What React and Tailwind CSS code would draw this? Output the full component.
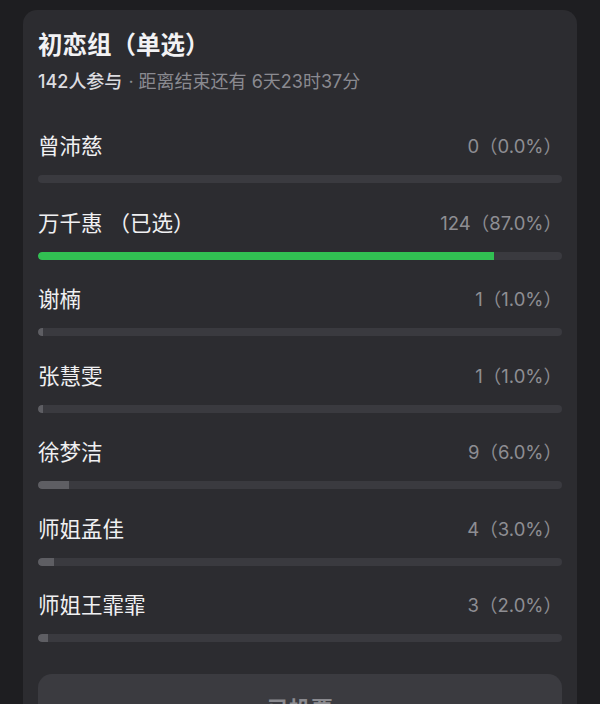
import React from "react";

const items = [
  { name: "曾沛慈", pct: 0, label: "0（0.0%）" },
  { name: "万千惠 （已选）", pct: 87, label: "124（87.0%）", selected: true },
  { name: "谢楠", pct: 1, label: "1（1.0%）" },
  { name: "张慧雯", pct: 1, label: "1（1.0%）" },
  { name: "徐梦洁", pct: 6, label: "9（6.0%）" },
  { name: "师姐孟佳", pct: 3, label: "4（3.0%）" },
  { name: "师姐王霏霏", pct: 2, label: "3（2.0%）" },
];

export default function App() {
  return (
    <div
      className="w-[600px] h-[704px] overflow-hidden bg-[#1e1e21] pt-[10px] px-[23px]"
      style={{ fontFamily: '"Inter", "Noto Sans CJK SC", sans-serif' }}
    >
      <div className="bg-[#2c2c30] rounded-[14px] px-[15px] pt-[19px] pb-[20px] h-[760px]">
        <div className="text-[24.5px] leading-[32px] font-bold text-[#f2f2f4]">
          初恋组（单选）
        </div>
        <div className="mt-[8px] text-[18px] leading-[26px] flex items-center">
          <span className="text-[#dcdce0] font-medium">142人参与</span>
          <span className="text-[#8a8a90] ml-[6px]">· 距离结束还有 6天23时37分</span>
        </div>
        <div className="mt-[37px] flex flex-col">
          {items.map((it, i) => (
            <div key={i} className="flex flex-col h-[76.5px]">
              <div className="flex items-center justify-between h-[28px]">
                <span className="text-[21.5px] text-[#f0f0f2] leading-[28px]">{it.name}</span>
                <span className="text-[18.5px] text-[#8e8e93] leading-[28px]">{it.label}</span>
              </div>
              <div className="mt-[15px] h-[8px] rounded-full bg-[#3a3a3f] overflow-hidden">
                {it.pct > 0 && (
                  <div
                    className={
                      it.selected
                        ? "h-full rounded-l-full bg-[#31c052]"
                        : "h-full rounded-l-full bg-[#5e5e63]"
                    }
                    style={{ width: `${it.pct}%` }}
                  />
                )}
              </div>
            </div>
          ))}
        </div>
        <div className="mt-[6px] h-[60px] rounded-[14px] bg-[#3b3b40] flex items-center justify-center">
          <span className="text-[22px] font-semibold text-[#8a8a8f] mt-[12px]">已投票</span>
        </div>
      </div>
    </div>
  );
}
